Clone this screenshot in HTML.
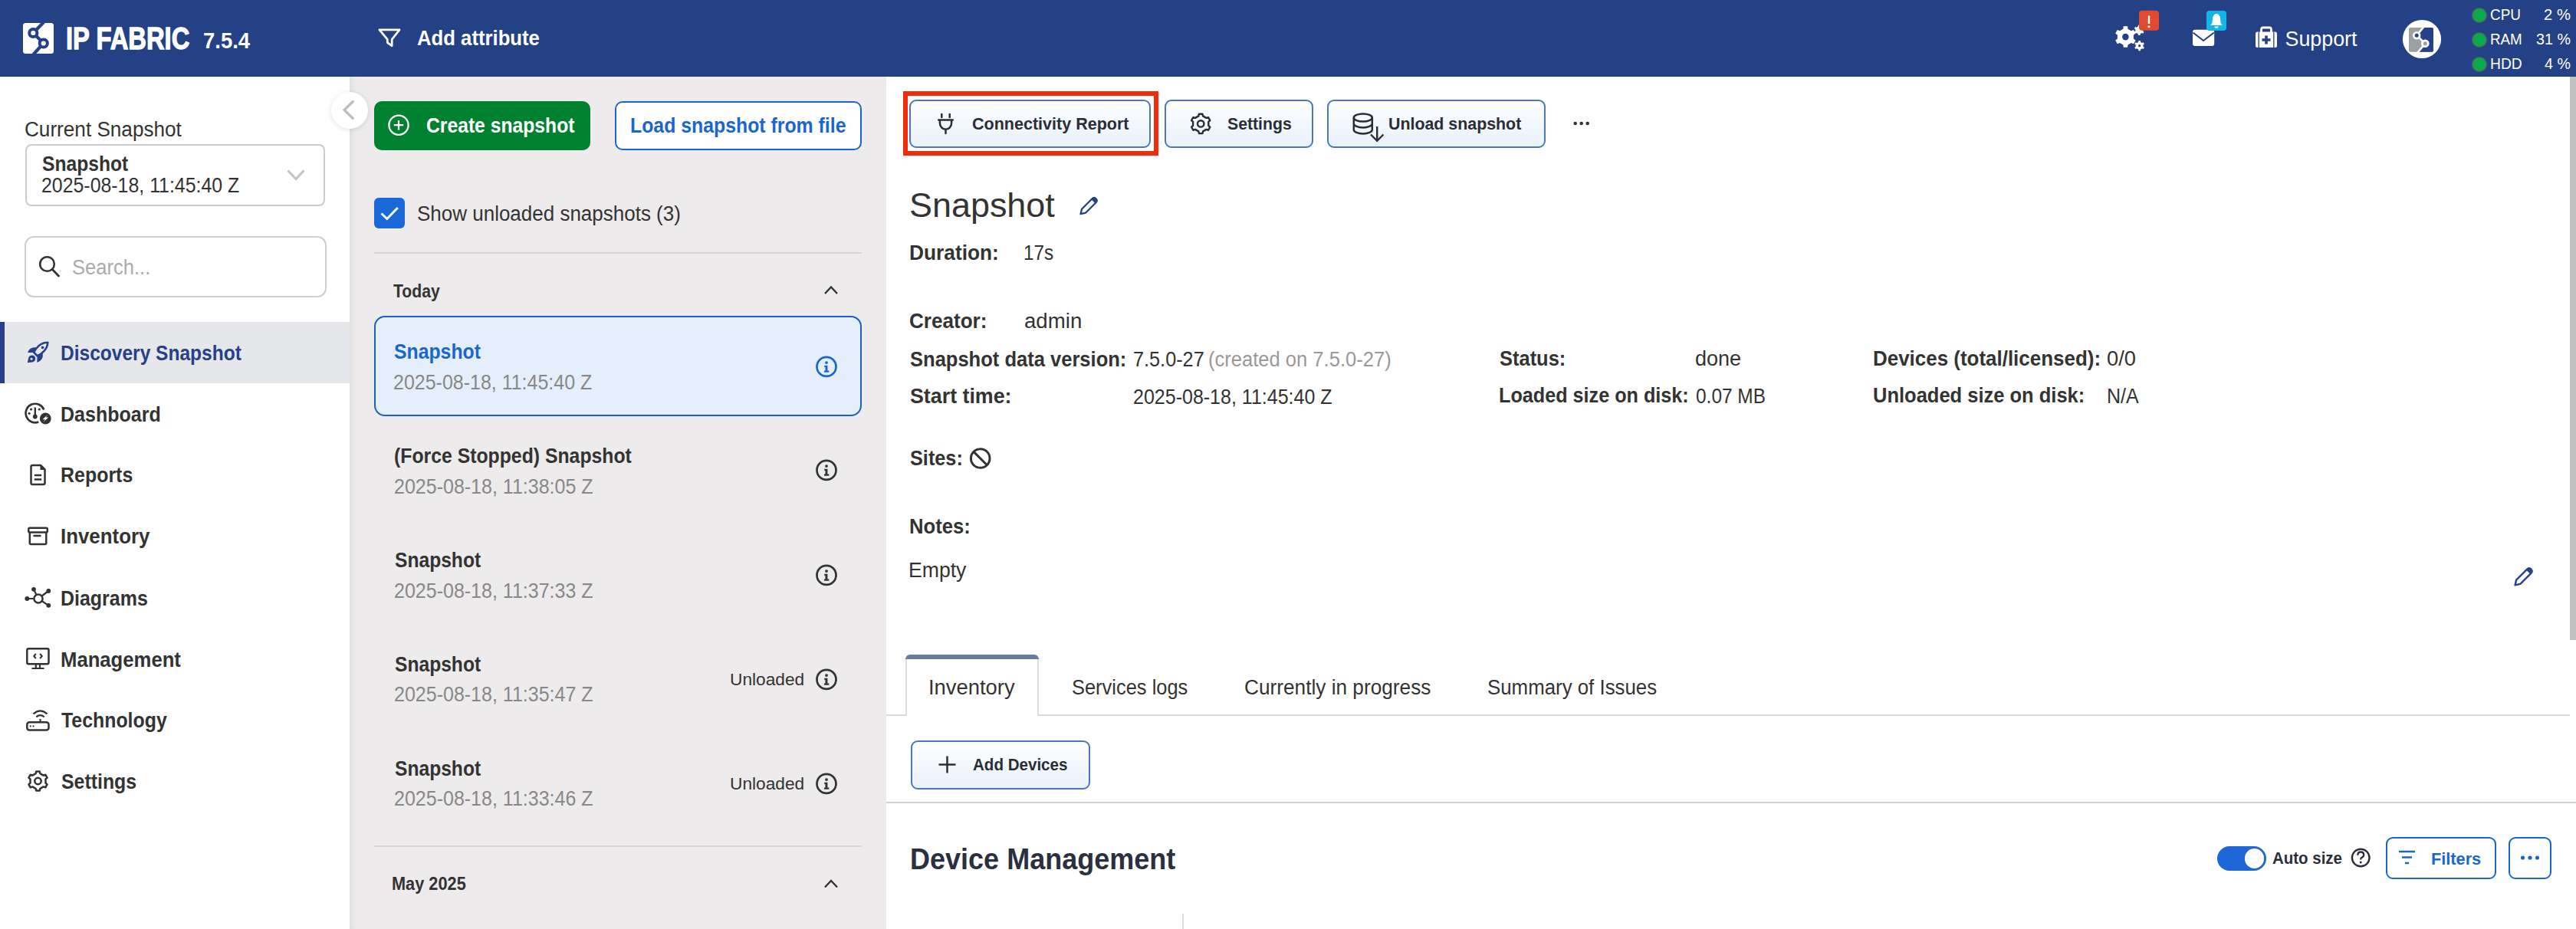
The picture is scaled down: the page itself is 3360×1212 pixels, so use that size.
<!DOCTYPE html>
<html><head><meta charset="utf-8"><title>IP Fabric - Discovery Snapshot</title>
<style>
html,body{margin:0;padding:0;}
body{width:3360px;height:1212px;overflow:hidden;position:relative;background:#fff;font-family:"Liberation Sans",sans-serif;}
.a{position:absolute;box-sizing:border-box;}
.t{position:absolute;white-space:nowrap;line-height:1;transform-origin:0 0;}
.btn{position:absolute;box-sizing:border-box;border:2px solid #4a78b8;border-radius:9px;background:linear-gradient(180deg,#fdfeff 0%,#e9f1fb 100%);}
</style></head>
<body>
<div class="a" style="left:0px;top:0px;width:3360px;height:100px;background:#244185"></div>
<div class="a" style="left:0px;top:99px;width:3360px;height:1px;background:#1f3a76"></div>
<div class="a" style="left:456px;top:100px;width:700px;height:1112px;background:#edebeb;box-shadow:inset 8px 0 8px -6px rgba(0,0,0,0.08)"></div>
<div class="a" style="left:0px;top:420px;width:456px;height:80px;background:#e6e7eb"></div>
<div class="a" style="left:0px;top:420px;width:6px;height:80px;background:#26408a"></div>
<div class="a" style="left:32.5px;top:188px;width:391px;height:80.5px;border:2px solid #cccccc;border-radius:8px;background:#fff"></div>
<div class="a" style="left:32px;top:308px;width:394px;height:80px;border:2px solid #cfcfcf;border-radius:12px;background:#fff"></div>
<div class="a" style="left:432px;top:120px;width:48px;height:48px;border-radius:50%;background:#fff;box-shadow:0 1px 6px rgba(0,0,0,0.12)"></div>
<div class="a" style="left:488px;top:132px;width:282px;height:64px;background:#00812f;border-radius:10px"></div>
<div class="a" style="left:802px;top:132px;width:322px;height:64px;border:2px solid #1a66d0;border-radius:10px;background:#fff"></div>
<div class="a" style="left:488px;top:329px;width:636px;height:2px;background:#d6d4d4"></div>
<div class="a" style="left:488px;top:1103px;width:636px;height:2px;background:#d6d4d4"></div>
<div class="a" style="left:488px;top:412px;width:636px;height:131px;border:2.3px solid #1a60c6;border-radius:14px;background:#e5effc"></div>
<div class="a" style="left:3352px;top:100px;width:8px;height:735px;background:#c1c1c1"></div>
<div class="a" style="left:1177.5px;top:119.2px;width:333.3px;height:83.6px;border:6px solid #f42b0b"></div>
<div class="btn" style="left:1186.3px;top:130.4px;width:315.2px;height:62.8px"></div>
<div class="btn" style="left:1519px;top:130.4px;width:194px;height:62.8px"></div>
<div class="btn" style="left:1730.5px;top:130.4px;width:285px;height:62.8px"></div>
<div class="btn" style="left:1188.3px;top:966.1px;width:233.4px;height:63.6px"></div>
<div class="a" style="left:1156px;top:932px;width:2196px;height:2px;background:#dcdcdc"></div>
<div class="a" style="left:1181px;top:854px;width:174px;height:80px;border:2px solid #dcdcdc;border-bottom:none;border-radius:8px 8px 0 0;background:#fff"></div>
<div class="a" style="left:1181px;top:854px;width:174px;height:6.3px;background:#687d9e;border-radius:7px 7px 0 0"></div>
<div class="a" style="left:1156px;top:1045.7px;width:2204px;height:2px;background:#cfcfcf"></div>
<div class="a" style="left:1542px;top:1192px;width:2px;height:20px;background:#dddddd"></div>
<div class="a" style="left:2892px;top:1104px;width:64px;height:32px;background:#1f67d6;border-radius:16px"></div>
<div class="a" style="left:2927.6px;top:1107.4px;width:25.4px;height:25.4px;background:#fff;border-radius:50%"></div>
<div class="a" style="left:3112px;top:1092.4px;width:143.5px;height:54.8px;border:2px solid #1a66d0;border-radius:9px;background:#fff"></div>
<div class="a" style="left:3272px;top:1092.4px;width:55.8px;height:54.8px;border:2px solid #1a66d0;border-radius:9px;background:#fff"></div>
<svg class="a" style="left:0;top:0" width="3360" height="1212" viewBox="0 0 3360 1212">
<rect x="30" y="30" width="40" height="40" rx="3.5" fill="#fff"/>
<path d="M57,29 L43.3,43 L56.75,56.5 L43.5,71" fill="none" stroke="#244185" stroke-width="4.2"/>
<circle cx="43.3" cy="43" r="5.1" fill="#fff" stroke="#244185" stroke-width="4"/>
<circle cx="56.75" cy="56.5" r="5.1" fill="#fff" stroke="#244185" stroke-width="4"/>
<path d="M494.9,38.9 H521.1 L511.2,51.4 V59.8 L505.3,55.6 V51.4 Z" fill="none" stroke="#fff" stroke-width="2.7" stroke-linejoin="round"/>
<path d="M2769.28,37.76 L2769.78,34.35 L2775.02,34.35 L2775.52,37.76 L2779.79,40.23 L2783,38.95 L2785.62,43.5 L2782.91,45.63 L2782.91,50.57 L2785.62,52.7 L2783,57.25 L2779.79,55.97 L2775.52,58.44 L2775.02,61.85 L2769.78,61.85 L2769.28,58.44 L2765.01,55.97 L2761.8,57.25 L2759.18,52.7 L2761.89,50.57 L2761.89,45.63 L2759.18,43.5 L2761.8,38.95 L2765.01,40.23 Z" fill="#fff"/>
<circle cx="2772.4" cy="48.1" r="4.3" fill="#244185"/>
<path d="M2789.15,54.91 L2789.34,53.12 L2791.86,53.12 L2792.05,54.91 L2794.02,56.06 L2795.67,55.32 L2796.93,57.5 L2795.47,58.56 L2795.47,60.84 L2796.93,61.9 L2795.67,64.08 L2794.02,63.34 L2792.05,64.49 L2791.86,66.28 L2789.34,66.28 L2789.15,64.49 L2787.18,63.34 L2785.53,64.08 L2784.27,61.9 L2785.73,60.84 L2785.73,58.56 L2784.27,57.5 L2785.53,55.32 L2787.18,56.06 Z" fill="#fff"/>
<circle cx="2790.6" cy="59.7" r="1.6" fill="#244185"/>
<path d="M2788.75,34.61 L2788.94,32.82 L2791.46,32.82 L2791.65,34.61 L2793.62,35.76 L2795.27,35.02 L2796.53,37.2 L2795.07,38.26 L2795.07,40.54 L2796.53,41.6 L2795.27,43.78 L2793.62,43.04 L2791.65,44.19 L2791.46,45.98 L2788.94,45.98 L2788.75,44.19 L2786.78,43.04 L2785.13,43.78 L2783.87,41.6 L2785.33,40.54 L2785.33,38.26 L2783.87,37.2 L2785.13,35.02 L2786.78,35.76 Z" fill="#fff"/>
<rect x="2790" y="13.8" width="26" height="26" rx="4" fill="#e04a31"/>
<path d="M2803,20.5 V31" stroke="#fff" stroke-width="2.4"/><circle cx="2803" cy="34.8" r="1.5" fill="#fff"/>
<rect x="2860" y="38.7" width="28.2" height="21.3" rx="3" fill="#fff"/>
<path d="M2860.5,42.5 L2874.1,53 L2887.7,42.5" fill="none" stroke="#244185" stroke-width="2"/>
<rect x="2878" y="14" width="26" height="26" rx="4" fill="#12b4e9"/>
<path d="M2891,18 C2893.8,18 2895.8,20.5 2896,24.5 L2896.5,29.5 C2896.8,31 2898,32 2899,33 H2883 C2884,32 2885.2,31 2885.5,29.5 L2886,24.5 C2886.2,20.5 2888.2,18 2891,18 Z" fill="#fff"/>
<path d="M2888.5,34.5 H2893.5 C2893.5,36 2892.5,36.8 2891,36.8 C2889.5,36.8 2888.5,36 2888.5,34.5 Z" fill="#fff"/>
<path d="M2949.5,42 V38.5 Q2949.5,36 2952,36 H2960 Q2962.5,36 2962.5,38.5 V42" fill="none" stroke="#fff" stroke-width="2.8"/>
<rect x="2942" y="41.5" width="28" height="20.5" rx="2.5" fill="#fff"/>
<path d="M2946.2,41.5 V62 M2965.8,41.5 V62" stroke="#244185" stroke-width="1.3"/>
<path d="M2956,46.5 V57.5 M2950.5,52 H2961.5" stroke="#244185" stroke-width="3.6"/>
<circle cx="3159" cy="51" r="25.1" fill="#fff"/>
<rect x="3142" y="36" width="32" height="31.7" rx="2" fill="#9aa1a1"/>
<path d="M3161,36 H3172 Q3174,36 3174,38 V65.7 Q3174,67.7 3172,67.7 H3154 L3163.3,56.8 L3152.2,46.2 Z" fill="#26408a"/>
<path d="M3161.5,35 L3152.2,46.2 L3163.3,56.8 L3153.5,68.5" fill="none" stroke="#fff" stroke-width="2.6"/>
<circle cx="3152.2" cy="46.2" r="3.9" fill="#26408a" stroke="#fff" stroke-width="2.8"/>
<circle cx="3163.3" cy="56.8" r="3.9" fill="#9aa1a1" stroke="#fff" stroke-width="2.8"/>
<circle cx="3234" cy="20" r="9.2" fill="#0aa94b" stroke="#4f6a5c" stroke-width="1.6"/>
<circle cx="3234" cy="52" r="9.2" fill="#0aa94b" stroke="#4f6a5c" stroke-width="1.6"/>
<circle cx="3234" cy="84" r="9.2" fill="#0aa94b" stroke="#4f6a5c" stroke-width="1.6"/>
<path d="M376.5,223.5 L386,233.5 L395.5,223.5" fill="none" stroke="#c4c4c4" stroke-width="3.2" stroke-linecap="round" stroke-linejoin="round"/>
<circle cx="61.5" cy="344.5" r="9.3" fill="none" stroke="#333" stroke-width="2.6"/>
<path d="M68.3,351.5 L76.5,360" stroke="#333" stroke-width="2.8" stroke-linecap="round"/>
<path d="M62.3,446.8 C56,446.8 51,449.5 47,455 L44,459.5 L48.8,464.5 L53.5,461.5 C59,457.5 62.3,453 62.3,446.8 Z" fill="none" stroke="#26408a" stroke-width="2.6" stroke-linejoin="round"/>
<circle cx="55.6" cy="453.4" r="1.8" fill="#26408a"/>
<path d="M36.2,460 C37.5,456 40,453.5 44.5,453.2 L48,453.2 L44.5,460 Z" fill="#26408a"/>
<path d="M48.6,463 L55.8,459.5 L55.8,464 C55.8,468 52.5,471.5 48.3,472.7 Z" fill="#26408a"/>
<path d="M35.8,473.2 L37,467.5 C37.5,465 39.5,463.5 41.8,463.5 C44.5,463.5 46.2,465.5 46.2,468 C46.2,470.5 44.5,472 42,472.5 Z" fill="#26408a"/>
<circle cx="41" cy="468.2" r="1.5" fill="#e6e7eb"/>
<path d="M57.3,534.5 A12.3,12.3 0 1 0 50.3,550.5" fill="none" stroke="#333" stroke-width="2.6"/>
<path d="M45.8,531.5 V541" stroke="#333" stroke-width="2.4"/><circle cx="45.8" cy="543.5" r="2.9" fill="#333"/>
<circle cx="40.6" cy="534" r="1.6" fill="#333"/>
<circle cx="51.3" cy="534" r="1.6" fill="#333"/>
<circle cx="38.1" cy="539.3" r="1.6" fill="#333"/>
<circle cx="59.3" cy="546" r="7.4" fill="#333"/>
<path d="M62.4,540.8 L55.6,547.2 H59.1 L56.2,551 L63.1,544.4 H59.7 Z" fill="#fff"/>
<path d="M42.5,607 H53 L58.5,612.5 V630 Q58.5,632 56.5,632 H42.5 Q40.5,632 40.5,630 V609 Q40.5,607 42.5,607 Z" fill="none" stroke="#333" stroke-width="2.5" stroke-linejoin="round"/>
<path d="M52.5,607 L58.5,613 H52.5 Z" fill="#333"/>
<path d="M44.8,620 H54.2 M44.8,625.5 H54.2" stroke="#333" stroke-width="2.4"/>
<rect x="37.3" y="688.8" width="24.5" height="5.6" rx="1.5" fill="none" stroke="#333" stroke-width="2.5"/>
<path d="M38.8,694.4 V708.5 Q38.8,710 40.3,710 H58.8 Q60.3,710 60.3,708.5 V694.4" fill="none" stroke="#333" stroke-width="2.5"/>
<path d="M44.5,699 H52.5" stroke="#333" stroke-width="2.4" stroke-linecap="round"/>
<path d="M50,781 L44,769 M50,781 L63.2,771 M50,781 L35.5,781 M50,781 L63.2,789.8" stroke="#333" stroke-width="2.2"/>
<circle cx="50" cy="781" r="5.6" fill="#fff" stroke="#333" stroke-width="2.5"/>
<circle cx="44" cy="768.8" r="2.9" fill="#333"/>
<circle cx="63.3" cy="771" r="2.9" fill="#333"/>
<circle cx="35.3" cy="781" r="2.9" fill="#333"/>
<circle cx="63.3" cy="789.8" r="2.9" fill="#333"/>
<rect x="35.3" y="846.3" width="28.2" height="20" rx="2" fill="none" stroke="#333" stroke-width="2.5"/>
<path d="M46.8,866.5 V871 M52,866.5 V871 M41.5,872 H57.5" stroke="#333" stroke-width="2.2"/>
<path d="M46.8,852.8 L44.3,856 L46.8,859.2 M52.2,852.8 L54.7,856 L52.2,859.2" fill="none" stroke="#333" stroke-width="2.1"/>
<rect x="35.3" y="942.3" width="28.2" height="10.2" rx="3" fill="none" stroke="#333" stroke-width="2.5"/>
<circle cx="39.8" cy="947.4" r="1.1" fill="#333"/><circle cx="43.5" cy="947.4" r="1.1" fill="#333"/>
<path d="M52.5,938 V942.3" stroke="#333" stroke-width="2.2"/>
<path d="M47.3,935.3 Q52.5,931 57.7,935.3 M43.5,931.3 Q52.5,923.5 61.5,931.3" fill="none" stroke="#333" stroke-width="2.3"/>
<path d="M46.63,1009.11 L47.23,1006.4 L51.77,1006.4 L52.37,1009.11 L56.63,1011.57 L59.28,1010.74 L61.54,1014.66 L59.5,1016.54 L59.5,1021.46 L61.54,1023.34 L59.28,1027.26 L56.63,1026.43 L52.37,1028.89 L51.77,1031.6 L47.23,1031.6 L46.63,1028.89 L42.37,1026.43 L39.72,1027.26 L37.46,1023.34 L39.5,1021.46 L39.5,1016.54 L37.46,1014.66 L39.72,1010.74 L42.37,1011.57 Z" fill="none" stroke="#333" stroke-width="2.5" stroke-linejoin="round"/>
<circle cx="49.5" cy="1019" r="4.2" fill="none" stroke="#333" stroke-width="2.5"/>
<path d="M460.3,132.5 L449,143.5 L460.3,154.5" fill="none" stroke="#bebebe" stroke-width="3.2" stroke-linecap="round"/>
<circle cx="520" cy="163.2" r="12.6" fill="none" stroke="#fff" stroke-width="2.3"/>
<path d="M520,157 V169.4 M513.8,163.2 H526.2" stroke="#fff" stroke-width="2.3"/>
<rect x="488" y="258" width="40" height="40" rx="6" fill="#1a69d8"/>
<path d="M497.5,278.5 L504.8,285.5 L518.8,271" fill="none" stroke="#fff" stroke-width="3"/>
<path d="M1076,383 L1084,374.5 L1092,383" fill="none" stroke="#333" stroke-width="2.4"/>
<path d="M1076,1157.5 L1084,1149 L1092,1157.5" fill="none" stroke="#333" stroke-width="2.4"/>
<circle cx="1078" cy="478.4" r="12.5" fill="none" stroke="#1a66d0" stroke-width="2.7"/><circle cx="1078" cy="473.1" r="1.9" fill="#1a66d0"/><path d="M1075.3,476.7 h4.1 v6.8 h1.9 v2.3 h-6.3 v-2.3 h1.5 v-4.5 h-1.2 z" fill="#1a66d0"/>
<circle cx="1078" cy="613.4" r="12.5" fill="none" stroke="#333" stroke-width="2.7"/><circle cx="1078" cy="608.1" r="1.9" fill="#333"/><path d="M1075.3,611.7 h4.1 v6.8 h1.9 v2.3 h-6.3 v-2.3 h1.5 v-4.5 h-1.2 z" fill="#333"/>
<circle cx="1078" cy="750.4" r="12.5" fill="none" stroke="#333" stroke-width="2.7"/><circle cx="1078" cy="745.1" r="1.9" fill="#333"/><path d="M1075.3,748.7 h4.1 v6.8 h1.9 v2.3 h-6.3 v-2.3 h1.5 v-4.5 h-1.2 z" fill="#333"/>
<circle cx="1078" cy="886.4" r="12.5" fill="none" stroke="#333" stroke-width="2.7"/><circle cx="1078" cy="881.1" r="1.9" fill="#333"/><path d="M1075.3,884.7 h4.1 v6.8 h1.9 v2.3 h-6.3 v-2.3 h1.5 v-4.5 h-1.2 z" fill="#333"/>
<circle cx="1078" cy="1022.4" r="12.5" fill="none" stroke="#333" stroke-width="2.7"/><circle cx="1078" cy="1017.1" r="1.9" fill="#333"/><path d="M1075.3,1020.7 h4.1 v6.8 h1.9 v2.3 h-6.3 v-2.3 h1.5 v-4.5 h-1.2 z" fill="#333"/>
<path d="M1228.3,149 V153 M1238.7,149 V153 M1224.2,156.6 H1242.8 M1233.5,169 V174" stroke="#2a2d35" stroke-width="2.5" stroke-linecap="round"/>
<path d="M1225.9,157 V160.5 A7.6,8.4 0 0 0 1241.1,160.5 V157" fill="none" stroke="#2a2d35" stroke-width="2.5"/>
<path d="M1563.3,151.41 L1563.92,148.7 L1568.48,148.7 L1569.1,151.41 L1573.4,153.89 L1576.05,153.07 L1578.34,157.03 L1576.3,158.92 L1576.3,163.88 L1578.34,165.77 L1576.05,169.73 L1573.4,168.91 L1569.1,171.39 L1568.48,174.1 L1563.92,174.1 L1563.3,171.39 L1559,168.91 L1556.35,169.73 L1554.06,165.77 L1556.1,163.88 L1556.1,158.92 L1554.06,157.03 L1556.35,153.07 L1559,153.89 Z" fill="none" stroke="#2a2d35" stroke-width="2.4" stroke-linejoin="round"/>
<circle cx="1566.2" cy="161.4" r="4.2" fill="none" stroke="#2a2d35" stroke-width="2.4"/>
<ellipse cx="1777.8" cy="153.5" rx="12" ry="5.1" fill="none" stroke="#2a2d35" stroke-width="2.5"/>
<path d="M1765.8,153.5 V169.3 A12,5.1 0 0 0 1789.8,169.3 V153.5 M1765.8,161.3 A12,5.1 0 0 0 1789.8,161.3" fill="none" stroke="#2a2d35" stroke-width="2.5"/>
<path d="M1796.2,165 V183.5 M1788,175.5 L1796.2,183.8 L1804.4,175.5" fill="none" stroke="#2a2d35" stroke-width="2.4"/>
<circle cx="2054.7" cy="161" r="2.3" fill="#333"/>
<circle cx="2062.7" cy="161" r="2.3" fill="#333"/>
<circle cx="2070.7" cy="161" r="2.3" fill="#333"/>
<g transform="translate(1408,256.7) scale(1,1)"><path d="M1.5,22.5 L3,16 L16.5,2.5 Q19,0 21.5,2.5 Q24,5 21.5,7.5 L8,21 Z" fill="none" stroke="#26408a" stroke-width="2.3" stroke-linejoin="round"/><path d="M17,2 Q19.5,-0.5 22,2 Q24.5,4.5 22,7 L20.5,8.5 L15.5,3.5 Z" fill="#26408a"/></g>
<g transform="translate(3279,740) scale(1.04,1.04)"><path d="M1.5,22.5 L3,16 L16.5,2.5 Q19,0 21.5,2.5 Q24,5 21.5,7.5 L8,21 Z" fill="none" stroke="#26408a" stroke-width="2.3" stroke-linejoin="round"/><path d="M17,2 Q19.5,-0.5 22,2 Q24.5,4.5 22,7 L20.5,8.5 L15.5,3.5 Z" fill="#26408a"/></g>
<circle cx="1278.7" cy="598" r="12.3" fill="none" stroke="#333" stroke-width="3"/>
<path d="M1270,589.3 L1287.4,606.7" stroke="#333" stroke-width="3"/>
<path d="M1235.5,986.5 V1008.5 M1224.5,997.5 H1246.5" stroke="#2b2e36" stroke-width="2.5"/>
<circle cx="3079.2" cy="1119" r="11.3" fill="none" stroke="#2b2e3a" stroke-width="2.4"/>
<path d="M3075.3,1115.8 Q3075.3,1111.5 3079.2,1111.5 Q3083.2,1111.5 3083.2,1115.3 Q3083.2,1117.8 3080.2,1119 Q3079.2,1119.5 3079.2,1121.5" fill="none" stroke="#2b2e3a" stroke-width="2.3"/>
<circle cx="3079.2" cy="1125" r="1.5" fill="#2b2e3a"/>
<path d="M3129,1111 H3150 M3133,1118.5 H3146 M3137,1126 H3142" stroke="#1a66d0" stroke-width="2.5"/>
<circle cx="3290.5" cy="1119" r="2.6" fill="#1a66d0"/>
<circle cx="3300" cy="1119" r="2.6" fill="#1a66d0"/>
<circle cx="3309.5" cy="1119" r="2.6" fill="#1a66d0"/>
</svg>
<span class="t" style="left:86.39px;top:29.51px;font-size:40.58px;color:#ffffff;font-weight:bold;-webkit-text-stroke:1.3px #fff;transform:scaleX(0.8069)">IP FABRIC</span>
<span class="t" style="left:265.05px;top:39.36px;font-size:28.99px;color:#ffffff;font-weight:bold;transform:scaleX(0.9476)">7.5.4</span>
<span class="t" style="left:544px;top:37.21px;font-size:26.81px;color:#ffffff;font-weight:bold;transform:scaleX(0.9589)">Add attribute</span>
<span class="t" style="left:2980.6px;top:38.21px;font-size:26.81px;color:#ffffff">Support</span>
<span class="t" style="left:3248.1px;top:8.14px;font-size:21.01px;color:#ffffff;transform:scaleX(0.9011)">CPU</span>
<span class="t" style="left:3248.11px;top:40.14px;font-size:21.01px;color:#ffffff;transform:scaleX(0.8942)">RAM</span>
<span class="t" style="left:3248.08px;top:72.14px;font-size:21.01px;color:#ffffff;transform:scaleX(0.9181)">HDD</span>
<span class="t" style="left:3317.74px;top:8.14px;font-size:21.01px;color:#ffffff;transform:scaleX(0.9648)">2 %</span>
<span class="t" style="left:3307.7px;top:40.14px;font-size:21.01px;color:#ffffff;transform:scaleX(0.9387)">31 %</span>
<span class="t" style="left:3318.7px;top:72.14px;font-size:21.01px;color:#ffffff;transform:scaleX(0.9377)">4 %</span>
<span class="t" style="left:31.62px;top:155.81px;font-size:26.81px;color:#333333;transform:scaleX(0.9753)">Current Snapshot</span>
<span class="t" style="left:55px;top:201.01px;font-size:26.81px;color:#333333;font-weight:bold;transform:scaleX(0.9193)">Snapshot</span>
<span class="t" style="left:54.07px;top:229.21px;font-size:26.81px;color:#333333;transform:scaleX(0.9287)">2025-08-18, 11:45:40 Z</span>
<span class="t" style="left:94.05px;top:336.01px;font-size:26.81px;color:#ababab;transform:scaleX(0.9538)">Search...</span>
<span class="t" style="left:79.08px;top:448.21px;font-size:26.81px;color:#26408a;font-weight:bold;transform:scaleX(0.9154)">Discovery Snapshot</span>
<span class="t" style="left:79.07px;top:528.21px;font-size:26.81px;color:#333333;font-weight:bold;transform:scaleX(0.9339)">Dashboard</span>
<span class="t" style="left:79.07px;top:607.21px;font-size:26.81px;color:#333333;font-weight:bold;transform:scaleX(0.9311)">Reports</span>
<span class="t" style="left:79.04px;top:687.21px;font-size:26.81px;color:#333333;font-weight:bold;transform:scaleX(0.9648)">Inventory</span>
<span class="t" style="left:79.07px;top:768.21px;font-size:26.81px;color:#333333;font-weight:bold;transform:scaleX(0.9316)">Diagrams</span>
<span class="t" style="left:79.04px;top:848.21px;font-size:26.81px;color:#333333;font-weight:bold;transform:scaleX(0.9578)">Management</span>
<span class="t" style="left:80px;top:927.21px;font-size:26.81px;color:#333333;font-weight:bold;transform:scaleX(0.9281)">Technology</span>
<span class="t" style="left:80px;top:1007.21px;font-size:26.81px;color:#333333;font-weight:bold;transform:scaleX(0.9284)">Settings</span>
<span class="t" style="left:555.98px;top:151.21px;font-size:26.81px;color:#ffffff;font-weight:bold;transform:scaleX(0.9213)">Create snapshot</span>
<span class="t" style="left:822.37px;top:151.21px;font-size:26.81px;color:#1a66d0;font-weight:bold;transform:scaleX(0.9267)">Load snapshot from file</span>
<span class="t" style="left:544.03px;top:266.21px;font-size:26.81px;color:#333333;transform:scaleX(0.9699)">Show unloaded snapshots (3)</span>
<span class="t" style="left:512.8px;top:368.71px;font-size:23.04px;color:#333333;font-weight:bold;transform:scaleX(0.9200)">Today</span>
<span class="t" style="left:514px;top:446.21px;font-size:26.81px;color:#1a66d0;font-weight:bold;transform:scaleX(0.9251)">Snapshot</span>
<span class="t" style="left:513.07px;top:485.81px;font-size:26.81px;color:#888888;transform:scaleX(0.9323)">2025-08-18, 11:45:40 Z</span>
<span class="t" style="left:513.57px;top:582.21px;font-size:26.81px;color:#333333;font-weight:bold;transform:scaleX(0.9250)">(Force Stopped) Snapshot</span>
<span class="t" style="left:513.57px;top:622.21px;font-size:26.81px;color:#888888;transform:scaleX(0.9334)">2025-08-18, 11:38:05 Z</span>
<span class="t" style="left:514.5px;top:718.21px;font-size:26.81px;color:#333333;font-weight:bold;transform:scaleX(0.9185)">Snapshot</span>
<span class="t" style="left:513.57px;top:758.21px;font-size:26.81px;color:#888888;transform:scaleX(0.9334)">2025-08-18, 11:37:33 Z</span>
<span class="t" style="left:514.5px;top:854.21px;font-size:26.81px;color:#333333;font-weight:bold;transform:scaleX(0.9185)">Snapshot</span>
<span class="t" style="left:513.57px;top:893.21px;font-size:26.81px;color:#888888;transform:scaleX(0.9334)">2025-08-18, 11:35:47 Z</span>
<span class="t" style="left:952.31px;top:874.54px;font-size:22.9px;color:#333333;transform:scaleX(0.9916)">Unloaded</span>
<span class="t" style="left:514.5px;top:989.71px;font-size:26.81px;color:#333333;font-weight:bold;transform:scaleX(0.9185)">Snapshot</span>
<span class="t" style="left:513.57px;top:1029.21px;font-size:26.81px;color:#888888;transform:scaleX(0.9334)">2025-08-18, 11:33:46 Z</span>
<span class="t" style="left:952.31px;top:1010.54px;font-size:22.9px;color:#333333;transform:scaleX(0.9916)">Unloaded</span>
<span class="t" style="left:511.06px;top:1142.41px;font-size:23.04px;color:#333333;font-weight:bold;transform:scaleX(0.9446)">May 2025</span>
<span class="t" style="left:1268px;top:150.34px;font-size:22.9px;color:#2a2d35;font-weight:bold;transform:scaleX(0.9402)">Connectivity Report</span>
<span class="t" style="left:1600.6px;top:150.34px;font-size:22.9px;color:#2a2d35;font-weight:bold;transform:scaleX(0.9272)">Settings</span>
<span class="t" style="left:1811.07px;top:150.34px;font-size:22.9px;color:#2a2d35;font-weight:bold;transform:scaleX(0.9333)">Unload snapshot</span>
<span class="t" style="left:1186.01px;top:245.81px;font-size:44.93px;color:#333333">Snapshot</span>
<span class="t" style="left:1186.02px;top:316.91px;font-size:26.81px;color:#333333;font-weight:bold;transform:scaleX(0.9814)">Duration:</span>
<span class="t" style="left:1335.19px;top:316.91px;font-size:26.81px;color:#333333;transform:scaleX(0.9067)">17s</span>
<span class="t" style="left:1186.03px;top:405.91px;font-size:26.81px;color:#333333;font-weight:bold;transform:scaleX(0.9733)">Creator:</span>
<span class="t" style="left:1335.67px;top:405.91px;font-size:26.81px;color:#333333;transform:scaleX(1.0312)">admin</span>
<span class="t" style="left:1187px;top:455.71px;font-size:26.81px;color:#333333;font-weight:bold;transform:scaleX(0.9528)">Snapshot data version:</span>
<span class="t" style="left:1477.76px;top:455.71px;font-size:26.81px;color:#333333;transform:scaleX(0.9427)">7.5.0-27</span>
<span class="t" style="left:1576.05px;top:455.71px;font-size:26.81px;color:#999999;transform:scaleX(0.9536)">(created on 7.5.0-27)</span>
<span class="t" style="left:1956px;top:455.21px;font-size:26.81px;color:#333333;font-weight:bold;transform:scaleX(0.9506)">Status:</span>
<span class="t" style="left:2211.49px;top:455.21px;font-size:26.81px;color:#333333;transform:scaleX(1.0085)">done</span>
<span class="t" style="left:2442.53px;top:455.21px;font-size:26.81px;color:#333333;font-weight:bold;transform:scaleX(0.9682)">Devices (total/licensed):</span>
<span class="t" style="left:2747.98px;top:455.21px;font-size:26.81px;color:#333333;transform:scaleX(1.0184)">0/0</span>
<span class="t" style="left:1187px;top:503.61px;font-size:26.81px;color:#333333;font-weight:bold">Start time:</span>
<span class="t" style="left:1477.77px;top:505.21px;font-size:26.81px;color:#333333;transform:scaleX(0.9334)">2025-08-18, 11:45:40 Z</span>
<span class="t" style="left:1955.06px;top:502.81px;font-size:26.81px;color:#333333;font-weight:bold;transform:scaleX(0.9401)">Loaded size on disk:</span>
<span class="t" style="left:2211.59px;top:503.91px;font-size:26.81px;color:#333333;transform:scaleX(0.9120)">0.07 MB</span>
<span class="t" style="left:2442.55px;top:502.81px;font-size:26.81px;color:#333333;font-weight:bold;transform:scaleX(0.9516)">Unloaded size on disk:</span>
<span class="t" style="left:2748.13px;top:504.21px;font-size:26.81px;color:#333333;transform:scaleX(0.9346)">N/A</span>
<span class="t" style="left:1187px;top:585.01px;font-size:26.81px;color:#333333;font-weight:bold;transform:scaleX(0.9430)">Sites:</span>
<span class="t" style="left:1186.04px;top:674.21px;font-size:26.81px;color:#333333;font-weight:bold;transform:scaleX(0.9571)">Notes:</span>
<span class="t" style="left:1185.01px;top:730.61px;font-size:26.81px;color:#333333;transform:scaleX(0.9927)">Empty</span>
<span class="t" style="left:1210.76px;top:883.91px;font-size:26.81px;color:#333333;transform:scaleX(1.0218)">Inventory</span>
<span class="t" style="left:1398.05px;top:883.91px;font-size:26.81px;color:#333333;transform:scaleX(0.9496)">Services logs</span>
<span class="t" style="left:1623.02px;top:883.91px;font-size:26.81px;color:#333333;transform:scaleX(0.9785)">Currently in progress</span>
<span class="t" style="left:1940.04px;top:883.91px;font-size:26.81px;color:#333333;transform:scaleX(0.9643)">Summary of Issues</span>
<span class="t" style="left:1269.3px;top:986.24px;font-size:22.9px;color:#2a2d35;font-weight:bold;transform:scaleX(0.8983)">Add Devices</span>
<span class="t" style="left:1187.12px;top:1102.06px;font-size:38.41px;color:#2b3040;font-weight:bold;transform:scaleX(0.9378)">Device Management</span>
<span class="t" style="left:2963.8px;top:1108.34px;font-size:22.9px;color:#2b2e3a;font-weight:bold;transform:scaleX(0.8935)">Auto size</span>
<span class="t" style="left:3171.05px;top:1108.54px;font-size:22.9px;color:#1a66d0;font-weight:bold;transform:scaleX(0.9488)">Filters</span>
</body></html>
